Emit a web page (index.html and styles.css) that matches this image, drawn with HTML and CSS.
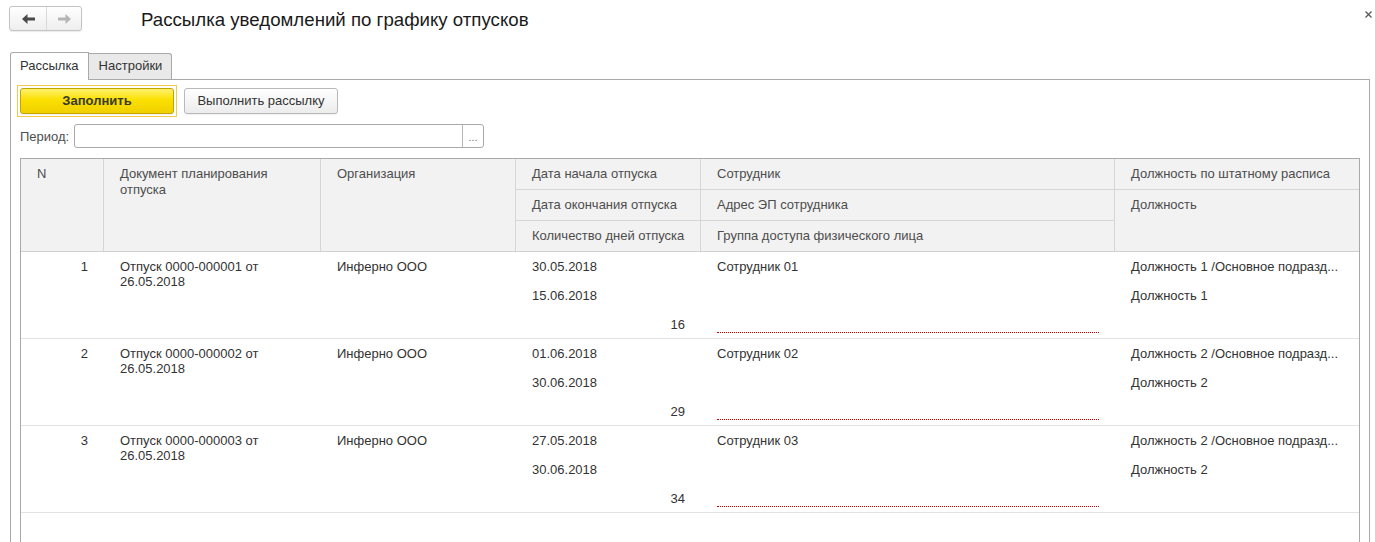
FILE: index.html
```html
<!DOCTYPE html>
<html lang="ru">
<head>
<meta charset="utf-8">
<title>Рассылка уведомлений по графику отпусков</title>
<link rel="stylesheet" href="styles.css">
</head>
<body>
<div class="top">
  <div class="nav">
    <button class="nav-btn back" type="button"><svg width="13" height="10" viewBox="0 0 13 10"><path d="M0 5 L5.5 0 L5.5 3.6 L13 3.6 L13 6.4 L5.5 6.4 L5.5 10 Z"/></svg></button>
    <button class="nav-btn fwd" type="button"><svg width="13" height="10" viewBox="0 0 13 10"><path d="M13 5 L7.5 0 L7.5 3.6 L0 3.6 L0 6.4 L7.5 6.4 L7.5 10 Z"/></svg></button>
  </div>
  <h1 class="title">Рассылка уведомлений по графику отпусков</h1>
  <button class="close" type="button"><svg width="7" height="7" viewBox="0 0 7 7"><path d="M0.5 0.5 L6.5 6.5 M6.5 0.5 L0.5 6.5"/></svg></button>
</div>

<div class="tabs">
  <div class="tab active">Рассылка</div>
  <div class="tab">Настройки</div>
</div>

<div class="panel">
  <div class="toolbar">
    <span class="focus-ring"><button class="btn btn-primary" type="button">Заполнить</button></span>
    <button class="btn" type="button">Выполнить рассылку</button>
  </div>

  <div class="period">
    <span class="period-label">Период:</span>
    <div class="input">
      <span class="input-field"></span>
      <span class="input-btn">...</span>
    </div>
  </div>

  <div class="table">
    <div class="thead">
      <div class="th c-n span3">N</div>
      <div class="th c-doc span3">Документ планирования отпуска</div>
      <div class="th c-org span3">Организация</div>
      <div class="th c-date r1">Дата начала отпуска</div>
      <div class="th c-date r2">Дата окончания отпуска</div>
      <div class="th c-date r3">Количество дней отпуска</div>
      <div class="th c-emp r1">Сотрудник</div>
      <div class="th c-emp r2">Адрес ЭП сотрудника</div>
      <div class="th c-emp r3">Группа доступа физического лица</div>
      <div class="th c-pos r1">Должность по штатному расписа</div>
      <div class="th c-pos r23">Должность</div>
    </div>

    <div class="trow">
      <div class="td c-n span3 num">1</div>
      <div class="td c-doc span3">Отпуск 0000-000001 от 26.05.2018</div>
      <div class="td c-org span3">Инферно ООО</div>
      <div class="td c-date r1">30.05.2018</div>
      <div class="td c-date r2">15.06.2018</div>
      <div class="td c-date r3 num">16</div>
      <div class="td c-emp r1">Сотрудник 01</div>
      <div class="td c-emp r2"></div>
      <div class="td c-emp r3"><div class="required"></div></div>
      <div class="td c-pos r1">Должность 1 /Основное подразд...</div>
      <div class="td c-pos r2">Должность 1</div>
    </div>

    <div class="trow">
      <div class="td c-n span3 num">2</div>
      <div class="td c-doc span3">Отпуск 0000-000002 от 26.05.2018</div>
      <div class="td c-org span3">Инферно ООО</div>
      <div class="td c-date r1">01.06.2018</div>
      <div class="td c-date r2">30.06.2018</div>
      <div class="td c-date r3 num">29</div>
      <div class="td c-emp r1">Сотрудник 02</div>
      <div class="td c-emp r2"></div>
      <div class="td c-emp r3"><div class="required"></div></div>
      <div class="td c-pos r1">Должность 2 /Основное подразд...</div>
      <div class="td c-pos r2">Должность 2</div>
    </div>

    <div class="trow">
      <div class="td c-n span3 num">3</div>
      <div class="td c-doc span3">Отпуск 0000-000003 от 26.05.2018</div>
      <div class="td c-org span3">Инферно ООО</div>
      <div class="td c-date r1">27.05.2018</div>
      <div class="td c-date r2">30.06.2018</div>
      <div class="td c-date r3 num">34</div>
      <div class="td c-emp r1">Сотрудник 03</div>
      <div class="td c-emp r2"></div>
      <div class="td c-emp r3"><div class="required"></div></div>
      <div class="td c-pos r1">Должность 2 /Основное подразд...</div>
      <div class="td c-pos r2">Должность 2</div>
    </div>
  </div>
</div>
</body>
</html>
```

FILE: styles.css
```css
* { box-sizing: border-box; }

html, body {
  margin: 0;
  padding: 0;
  height: 100%;
  overflow: hidden;
  background: #fff;
}

body {
  font-family: "Liberation Sans", Arial, sans-serif;
  font-size: 13px;
  color: #333;
}

button {
  font-family: inherit;
  font-size: inherit;
  margin: 0;
  cursor: default;
}

/* ---------- top bar ---------- */
.top {
  display: flex;
  align-items: flex-start;
  height: 52px;
  padding: 6px 0 0 9px;
}

.nav {
  display: flex;
  height: 25px;
  border: 1px solid #c3c3c3;
  border-radius: 3px;
  background: linear-gradient(#ffffff, #eeeeee);
  box-shadow: 0 1px 1px rgba(0,0,0,0.08);
}

.nav-btn {
  width: 37px;
  height: 23px;
  border: 0;
  padding: 0;
  background: transparent;
  display: flex;
  align-items: center;
  justify-content: center;
}

.nav-btn.back { border-right: 1px solid #d8d8d8; }
.nav-btn.back svg { fill: #4a4a4a; }
.nav-btn.fwd { width: 34px; }
.nav-btn.fwd svg { fill: #b5b5b5; }

.title {
  margin: 3px 0 0 59px;
  font-size: 18.67px;
  line-height: 22px;
  font-weight: normal;
  color: #1a1a1a;
}

.close {
  margin: 4px 2px 0 auto;
  width: 9px;
  height: 9px;
  padding: 1px;
  border: 0;
  background: transparent;
  display: flex;
}

.close svg { stroke: #555; stroke-width: 1.2; }

/* ---------- tabs ---------- */
.tabs {
  display: flex;
  align-items: flex-start;
  height: 28px;
  padding-left: 10px;
}

.tab {
  border: 1px solid #a9a9a9;
  border-bottom: 0;
  line-height: 15px;
  color: #333;
}

.tab.active {
  height: 28px;
  padding: 5px 9px 0 9px;
  background: #fff;
  border-radius: 3px 0 0 0;
  position: relative;
  z-index: 1;
}

.tab:not(.active) {
  height: 26px;
  margin-top: 1px;
  padding: 4px 9px 0 10px;
  border-left: 0;
  background: #e9e9e9;
  border-radius: 0 3px 0 0;
}

/* ---------- panel ---------- */
.panel {
  margin: -1px 5px 0 10px;
  height: 480px;
  border: 1px solid #a9a9a9;
  padding: 5px 9px 0 6px;
}

.toolbar {
  display: flex;
  align-items: center;
}

.focus-ring {
  display: flex;
  padding: 2px;
  border: 1px solid #f2c94a;
}

.btn {
  width: 154px;
  height: 26px;
  padding: 0;
  border: 1px solid #b9b9b9;
  border-radius: 3px;
  background: linear-gradient(#ffffff, #ececec);
  color: #333;
  line-height: 24px;
  text-align: center;
  box-shadow: 0 1px 1px rgba(0,0,0,0.06);
}

.toolbar > .btn { margin-left: 7px; }

.btn-primary {
  border-color: #c2a300;
  background: linear-gradient(#fff16e, #fbe000 45%, #f0d000);
  font-weight: bold;
  color: #3a3a2a;
}

/* ---------- period ---------- */
.period {
  display: flex;
  align-items: center;
  margin-top: 7px;
}

.period-label {
  margin-left: 3px;
  width: 54px;
  color: #4d4d4d;
}

.input {
  display: flex;
  width: 410px;
  height: 24px;
  border: 1px solid #a9a9a9;
  border-radius: 3px;
  background: #fff;
}

.input-field { flex: 1; }

.input-btn {
  width: 21px;
  border-left: 1px solid #b5b5b5;
  color: #777;
  font-size: 11px;
  line-height: 24px;
  text-align: center;
}

/* ---------- table ---------- */
.table {
  margin: 10px 0 0 3px;
  height: 420px;
  border: 1px solid #a9a9a9;
  border-bottom: 0;
}

.thead,
.trow {
  display: grid;
  grid-template-columns: 83px 217px 195px 185px 414px 244px;
}

.thead {
  grid-template-rows: 31px 31px 30px;
  background: #f2f2f2;
  border-bottom: 1px solid #cfcfcf;
  color: #4d4d4d;
}

.trow {
  grid-template-rows: 29px 29px 28px;
  border-bottom: 1px solid #e2e2e2;
}

.c-n { grid-column: 1; }
.c-doc { grid-column: 2; }
.c-org { grid-column: 3; }
.c-date { grid-column: 4; }
.c-emp { grid-column: 5; }
.c-pos { grid-column: 6; }

.span3 { grid-row: 1 / 4; }
.r1 { grid-row: 1; }
.r2 { grid-row: 2; }
.r3 { grid-row: 3; }
.r23 { grid-row: 2 / 4; }

.th {
  padding: 7px 8px 0 16px;
  line-height: 16px;
  overflow: hidden;
}

.th.c-n,
.th.c-doc,
.th.c-org,
.th.c-date,
.th.c-emp { border-right: 1px solid #d6d6d6; }

.th.r1,
.th.c-date.r2,
.th.c-emp.r2 { border-bottom: 1px solid #d6d6d6; }

.th.c-date,
.th.c-emp,
.th.c-pos { white-space: nowrap; }

.td {
  padding: 7px 16px 0 16px;
  line-height: 15px;
  white-space: nowrap;
  overflow: hidden;
}

.td.c-doc { white-space: normal; }

.td.num { text-align: right; }

.required {
  margin-top: 15px;
  border-bottom: 1px dotted #c00000;
}
```
